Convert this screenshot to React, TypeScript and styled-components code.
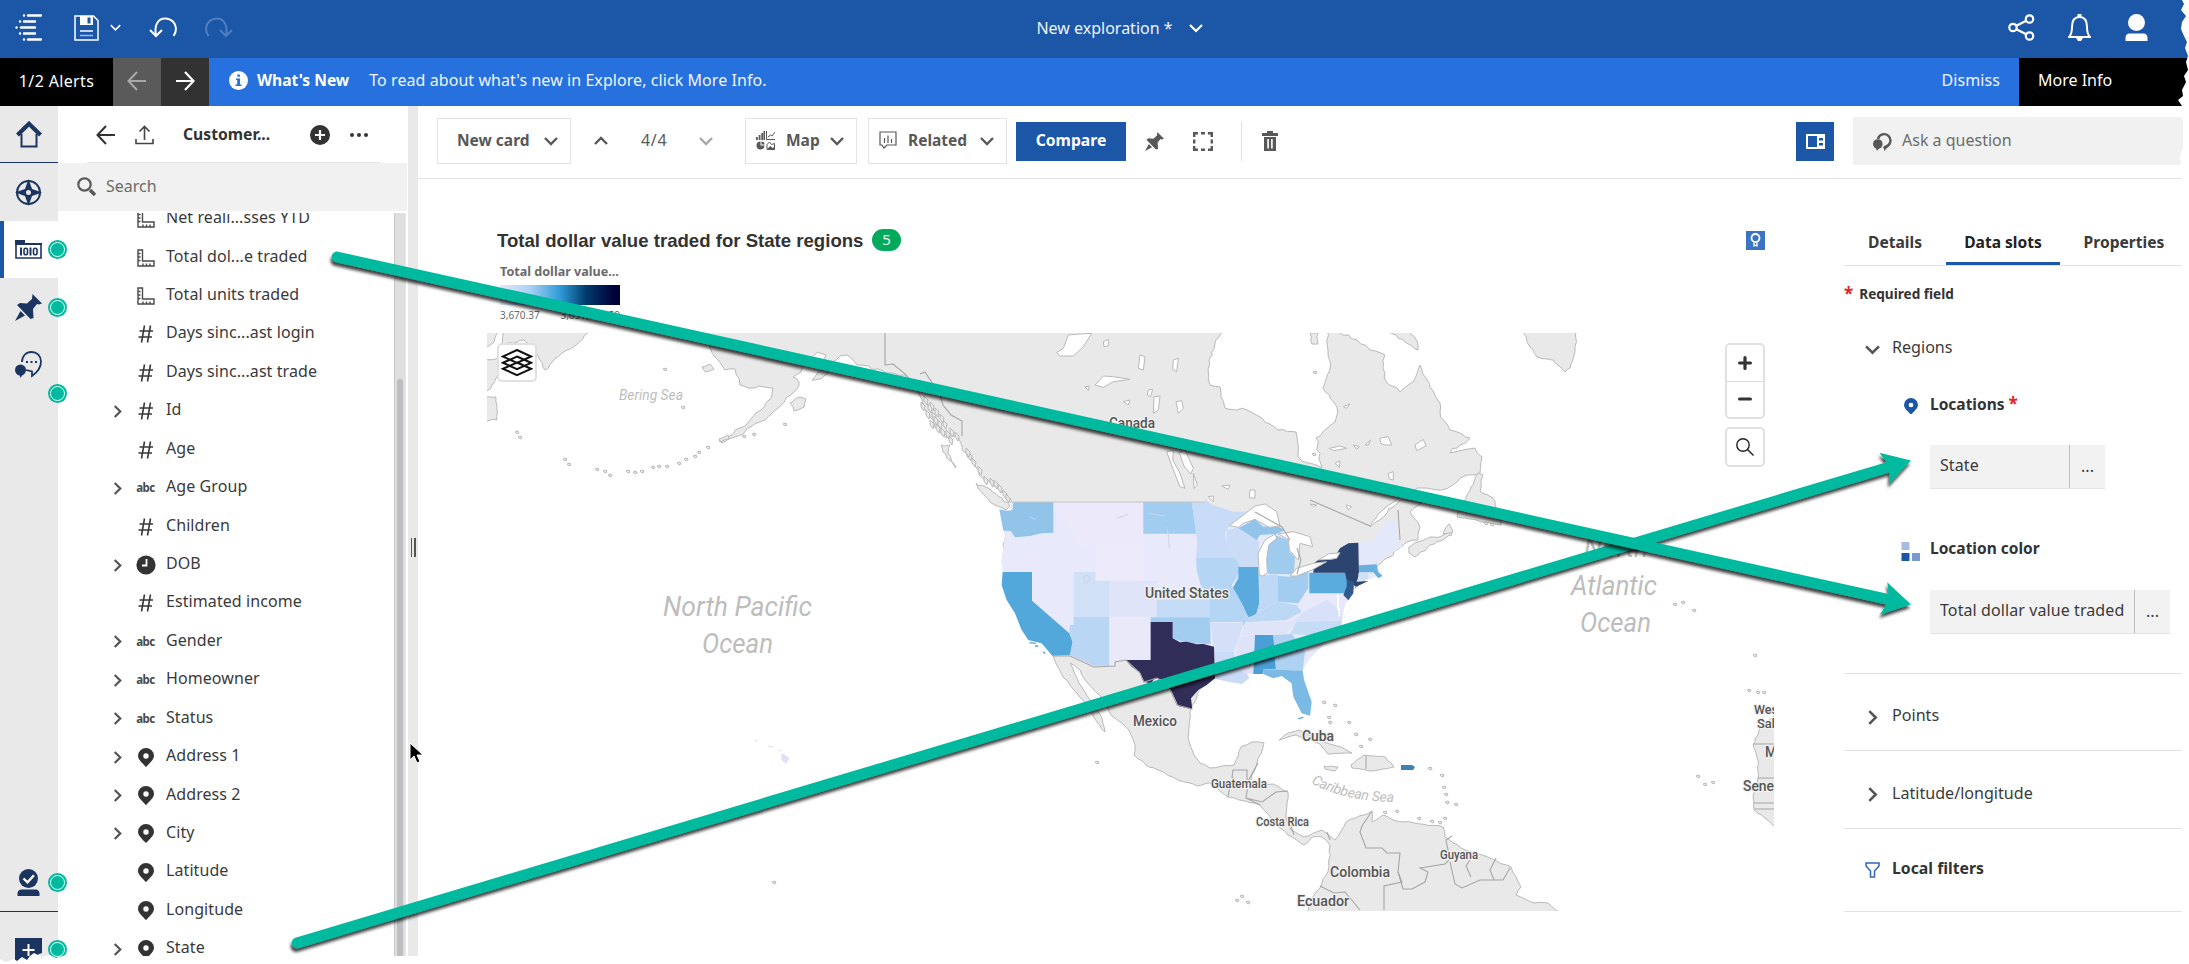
import React from 'react';
import styled, { createGlobalStyle } from 'styled-components';

const GlobalStyle = createGlobalStyle`
  * { box-sizing: border-box; }
  body { margin: 0; background: #fff; font-family: "Noto Sans", "Open Sans", sans-serif; font-size: 16px; color: #3a3a3a; }
  svg { display: block; flex: none; }
`;

/* ---------- page frame ---------- */
const Page = styled.div`
  position: relative; width: 2189px; height: 964px; overflow: hidden;
  display: flex; flex-direction: column; white-space: nowrap;
`;
const TopBar = styled.header`
  height: 58px; flex: none; background: #1c56a7; color: #fff;
  display: grid; grid-template-columns: 1fr auto 1fr; align-items: center; padding: 0 41px 3px 15px;
`;
const TopGroup = styled.div<{ $end?: boolean }>`
  display: flex; align-items: center; justify-content: ${p => (p.$end ? 'flex-end' : 'flex-start')};
`;
const DocTitle = styled.div`
  display: flex; align-items: center; gap: 16px; padding-left: 76px; color: #eef3fb; line-height: 22px;
`;
const Gap = styled.span<{ $w: number }>`width: ${p => p.$w}px; flex: none;`;

const AlertBar = styled.div`
  height: 48px; flex: none; background: #2671dd; color: #fff; display: flex; align-items: stretch;
`;
const AlertCell = styled.div<{ $w: number; $bg: string }>`
  width: ${p => p.$w}px; background: ${p => p.$bg}; display: flex; align-items: center; justify-content: center;
  padding-bottom: 3px; letter-spacing: 0.350px;
`;
const AlertBody = styled.div`
  flex: 1; display: flex; align-items: center; padding: 0 19px 4px 20px; color: #eef4fd;
  b { color: #fff; font-size: 15.600px; font-weight: 700; margin: 0 20px 0 9px; }
  span { letter-spacing: 0.070px; }
`;
const Dismiss = styled.span`margin-left: auto;`;
const MoreInfo = styled.div`
  width: 170px; background: #000; display: flex; align-items: center; padding: 0 0 4px 19px;
`;
const Body = styled.div`flex: 1; display: flex; min-height: 0;`;

/* ---------- icon rail ---------- */
const Rail = styled.nav`
  width: 58px; flex: none; background: #e9e9e9; display: flex; flex-direction: column;
`;
const RailItem = styled.div<{ $h: number; $line?: boolean; $active?: boolean; $pt?: number }>`
  height: ${p => p.$h}px; flex: none; display: flex; align-items: center; justify-content: center;
  border-bottom: ${p => (p.$line ? '1px solid #1b3560' : '0')};
  padding: ${p => p.$pt || 0}px ${p => (p.$active ? 5 : 1)}px 0 0;
  border-left: ${p => (p.$active ? '4px solid #1c56a7' : '0')};
  background: ${p => (p.$active ? '#fff' : 'transparent')};
`;
const RailSpace = styled.div`flex: 1;`;
const Marker = styled.i<{ $top: number }>`
  position: absolute; left: 48px; top: ${p => p.$top}px; width: 19px; height: 19px; border-radius: 50%;
  background: #00baa0; z-index: 2;
  &::after { content: ''; position: absolute; inset: 2px; border: 1px solid #eafffb; border-radius: 50%; }
`;

/* ---------- source panel ---------- */
const Source = styled.aside`
  width: 350px; flex: none; display: flex; flex-direction: column; background: #fff;
`;
const SourceHead = styled.div`
  height: 57px; flex: none; margin: 0 28px 0 29px; border-bottom: 1px solid #e4e4e4;
  display: flex; align-items: center; padding: 2px 12px 0 9px;
  b { font-size: 15.700px; font-weight: 700; margin: 0 auto 3px 29px; color: #333; }
`;
const SearchBox = styled.div`
  height: 48px; flex: none; background: #f1f1f1; margin-right: 1px; display: flex; align-items: center;
  gap: 10px; padding: 0 0 2px 19px; color: #6c6c6c;
`;
const ListArea = styled.div`flex: 1; display: flex; margin: 2px 2px 8px 0; overflow: hidden;`;
const List = styled.ul`
  flex: 1; margin: -14.500px 0 0; padding: 0; list-style: none; display: flex; flex-direction: column;
`;
const Row = styled.li`
  height: 38.430px; flex: none; display: grid; grid-template-columns: 22px 20px 1fr; column-gap: 10.500px;
  align-items: center; padding-left: 45px;
`;
const RowText = styled.span`padding-bottom: 1px; letter-spacing: 0.080px;`;
const Center = styled.span<{ $dx?: number }>`
  display: flex; justify-content: center; padding-top: 3px; margin-left: ${p => p.$dx || 0}px;
`;
const Abc = styled.span`font: 700 11.500px/12px "Noto Sans", sans-serif; letter-spacing: -0.500px; color: #4a4a4a;`;
const ScrollTrack = styled.div`
  width: 12px; flex: none; padding-top: 166px; background: #dedfdf; border-left: 1px solid #c6c8c8; border-right: 1px solid #e6e6e6;
`;
const ScrollThumb = styled.div`
  height: 100%; margin: 0 2px; border-radius: 3px 3px 0 0; background: #bcbfbf;
`;
const Splitter = styled.div`
  width: 10px; flex: none; margin-bottom: 8px; background: #e9e9e9; display: flex; align-items: center; justify-content: center;
  gap: 2px;
  &::before, &::after { content: ''; width: 1.500px; height: 19px; background: #555; margin-top: 32px; }
`;

/* ---------- work area ---------- */
const Work = styled.main`flex: 1; min-width: 0; display: flex; flex-direction: column; padding-right: 6px;`;
const Toolbar = styled.div`
  height: 73px; flex: none; border-bottom: 1px solid #e3e3e3; display: flex; align-items: center;
  padding: 0 0 2px 19px; color: #585858;
`;
const ToolButton = styled.div<{ $w: number; $ml?: number; $pl: number }>`
  width: ${p => p.$w}px; height: 46px; margin-left: ${p => p.$ml || 0}px; padding: 0 12px 0 ${p => p.$pl}px;
  border: 1px solid #e3e3e3; display: flex; align-items: center; justify-content: space-between;
  font-size: 15.500px; font-weight: 700;
`;
const ToolLabel = styled.span`display: flex; align-items: center; gap: 11px; padding-bottom: 2px;`;
const Compare = styled.div`
  width: 110px; height: 39px; margin-left: 9px; background: #1c56a7; color: #fff; font-size: 15.700px; font-weight: 700;
  display: flex; align-items: center; justify-content: center; padding-bottom: 2px;
`;
const Count = styled.span`width: 28px; margin: 0 30px 2px 33px; letter-spacing: 0.700px;`;
const Divider = styled.span`width: 1px; height: 39px; background: #e0e0e0; margin: 0 20px 0 28px;`;
const PanelToggle = styled.div`
  width: 38px; height: 39px; margin-left: auto; background: #1c56a7; display: flex; align-items: center; justify-content: center;
`;
const Ask = styled.div`
  width: 330px; height: 48px; margin-left: 19px; background: #f1f1f1; display: flex; align-items: center; gap: 10px;
  padding: 0 0 0 20px; color: #6c6c6c; span { padding-bottom: 2px; }
`;
const Stage = styled.div`flex: 1; display: flex; min-height: 0;`;
const Card = styled.section`width: 1356px; flex: none; padding: 49px 0 0 69px;`;
const CardHead = styled.div`height: 24px; display: flex; align-items: center; padding: 0 9px 0 10px;`;
const CardTitle = styled.h2`
  margin: 0; padding-top: 1px; font: 700 18.600px/24px "Liberation Sans", Arial, sans-serif; color: #333; width: 375px;
`;
const Badge = styled.span`
  width: 29px; height: 22px; border-radius: 11px; background: #00a95c; color: #e5fff2; font-size: 15px; line-height: 21px; text-align: center;
`;
const Hint = styled.span`
  width: 19px; height: 19px; margin-left: auto; background: #3a74c2; display: flex; align-items: center; justify-content: center;
`;
const Legend = styled.div`
  width: 120px; height: 81px; margin-left: 13px; padding-top: 11px; color: #6a6a6a; font-size: 12.600px; font-weight: 700; line-height: 18px;
`;
const Ramp = styled.div`
  height: 20px; margin-top: 4px;
  background: linear-gradient(90deg, #e6e6fa 0%, #a9d2f3 25%, #2f9bd8 50%, #003a6d 72%, #020039 95%);
`;
const RampEnds = styled.div`
  display: flex; justify-content: space-between; font-size: 10px; font-weight: 400; line-height: 20px;
`;
const MapBox = styled.div`position: relative; width: 1287px; height: 578px;`;
const MapButton = styled.div<{ $x: number; $y: number; $w: number; $h: number }>`
  position: absolute; left: ${p => p.$x}px; top: ${p => p.$y}px; width: ${p => p.$w}px; height: ${p => p.$h}px;
  background: #fff; border: 2px solid #e0e0e0; border-radius: 5px; display: flex; flex-direction: column;
  align-items: center;
  svg { margin: auto; }
  hr { width: 100%; margin: 0; border: 0; border-top: 1px solid #dcdcdc; }
`;

/* ---------- properties panel ---------- */
const Props = styled.aside`width: 338px; margin-left: 70px; flex: none; padding-top: 35px;`;
const Tabs = styled.div`
  height: 52px; border-bottom: 1px solid #e2e2e2; display: flex; align-items: stretch; font-size: 15.600px; font-weight: 700; color: #3a3a3a;
`;
const Tab = styled.div<{ $w: number; $on?: boolean }>`
  width: ${p => p.$w}px; flex: none; display: flex; align-items: center; justify-content: center; padding: 8px 0 0 0;
  border-bottom: 3px solid ${p => (p.$on ? '#1c56a7' : 'transparent')};
  color: ${p => (p.$on ? '#222' : 'inherit')};
`;
const Star = styled.span`color: #e62325; font-weight: 700; font-size: 17px;`;
const Required = styled.div`
  height: 55px; display: flex; align-items: center; gap: 6px; font-size: 13.600px; font-weight: 700; color: #333;
`;
const Section = styled.div<{ $h: number; $line?: boolean; $bold?: boolean; $pt?: number; $pb?: number }>`
  height: ${p => p.$h}px; display: flex; align-items: center; gap: 12px; padding: ${p => p.$pt || 0}px 0 ${p => p.$pb || 0}px 21px;
  border-bottom: ${p => (p.$line ? '1px solid #e2e2e2' : '0')};
  font-weight: ${p => (p.$bold ? 700 : 400)}; font-size: ${p => (p.$bold ? 15.8 : 16.1)}px; color: ${p => (p.$bold ? '#333' : 'inherit')};
  svg { margin-top: 4px; }
`;
const SlotGroup = styled.div<{ $h: number; $pt?: number; $line?: boolean }>`
  height: ${p => p.$h}px; padding-top: ${p => p.$pt || 0}px; border-bottom: ${p => (p.$line ? '1px solid #e2e2e2' : '0')};
`;
const SlotHead = styled.div`
  height: 28px; display: grid; grid-template-columns: 19px 1fr; column-gap: 10px; align-items: center; padding-left: 57px;
  font-size: 15.500px; font-weight: 700; color: #333;
  svg { margin: 6px auto 0; }
`;
const Slot = styled.div<{ $w: number }>`
  width: ${p => p.$w}px; height: 44px; margin: 28px 0 0 86px; background: #f2f2f2; border-bottom: 1px solid #e4e4e4; display: flex;
`;
const SlotName = styled.span`flex: 1; padding: 8px 0 0 10px; line-height: 24px; letter-spacing: 0.090px;`;
const SlotMore = styled.span`width: 36px; border-left: 1px solid #bdbdbd; text-align: center; line-height: 42px;`;

/* ---------- overlays ---------- */
const Overlay = styled.svg`position: absolute; left: 0; top: 0; pointer-events: none; z-index: 5;`;

const Chevron = ({ dir = 'down', c = '#555', w = 13, sw = 2.4 }: { dir?: string; c?: string; w?: number; sw?: number }) => {
  const rot = { down: 0, up: 180, right: -90 }[dir];
  return (
    <svg width={w} height={w} viewBox="0 0 14 14" fill="none" stroke={c} strokeWidth={sw}>
      <path d="M1 4l6 6 6-6" transform={`rotate(${rot} 7 7)`} />
    </svg>
  );
};
const PinMark = ({ c = '#333', w = 16 }: { c?: string; w?: number }) => (
  <svg width={w} height={w * 1.2} viewBox="0 0 16 19">
    <path fill={c} fillRule="evenodd" d="M8 0a8 8 0 0 1 8 7.800c0 3.600-4.800 7.600-8 11.200-3.200-3.600-8-7.600-8-11.200A8 8 0 0 1 8 0zm0 5.200a2.700 2.700 0 1 0 0 5.400 2.700 2.700 0 0 0 0-5.400z" />
  </svg>
);
const Thumbtack = ({ c, w }: { c: string; w: number }) => (
  <svg width={w} height={w} viewBox="0 0 27 27" fill={c}>
    <path d="M17.500 0l9.500 9.500-3 1-2-.5-4 5 .5 9-3 1L2 11l3-2 7 .500 5-4.500z" />
    <path d="M5.500 17l4.500 4.500L0 27z" />
  </svg>
);

const KindIcon = ({ kind }: { kind: string }) => {
  if (kind === 'abc') return <Abc>abc</Abc>;
  if (kind === 'pin') return <PinMark />;
  if (kind === 'clock')
    return (
      <svg width="20" height="20" viewBox="0 0 20 20">
        <circle cx="10" cy="10" r="9.600" fill="#333" />
        <path d="M10.500 4v6.500H6" fill="none" stroke="#fff" strokeWidth="1.800" />
      </svg>
    );
  if (kind === 'measure')
    return (
      <svg width="18" height="18" viewBox="0 0 18 18" fill="none" stroke="#4a4a4a" strokeWidth="1.400">
        <path d="M1 1h4.500v11H17v5H1zM1 4.500h2.500M1 8h2.500M1 11.500h2.500M6 17v-2.500M9.500 17v-2.500M13 17v-2.500" />
      </svg>
    );
  return (
    <svg width="16" height="18" viewBox="0 0 16 18" fill="none" stroke="#3a3a3a" strokeWidth="1.600">
      <path d="M6.500.5l-3 17M12.500.5l-3 17M1.500 6H15M.5 12H14" />
    </svg>
  );
};

const fields: [string, string, boolean][] = [
  ['Net reali...sses YTD', 'measure', false],
  ['Total dol...e traded', 'measure', false],
  ['Total units traded', 'measure', false],
  ['Days sinc...ast login', 'hash', false],
  ['Days sinc...ast trade', 'hash', false],
  ['Id', 'hash', true],
  ['Age', 'hash', false],
  ['Age Group', 'abc', true],
  ['Children', 'hash', false],
  ['DOB', 'clock', true],
  ['Estimated income', 'hash', false],
  ['Gender', 'abc', true],
  ['Homeowner', 'abc', true],
  ['Status', 'abc', true],
  ['Address 1', 'pin', true],
  ['Address 2', 'pin', true],
  ['City', 'pin', true],
  ['Latitude', 'pin', false],
  ['Longitude', 'pin', false],
  ['State', 'pin', true],
];

/* ---------- map geometry ---------- */
type Pt = [number, number];
const parse = (s: string): Pt[] => s.trim().split(/\s+/).map(p => p.split(',').map(Number) as Pt);

/* Breaks each long coast segment into short uneven steps so shores look natural. */
const shore = (s: string, amp = 1.6, step = 5): string => {
  const pts = parse(s);
  let seed = 7;
  const rnd = () => ((seed = (seed * 16807) % 2147483647) / 2147483647 - 0.5) * 2;
  let d = '';
  pts.forEach((a, i) => {
    const b = pts[(i + 1) % pts.length];
    d += `${i ? 'L' : 'M'}${a[0]} ${a[1]}`;
    const edge = a[1] <= 333 && b[1] <= 333;
    const rough = a[1] > 640 ? amp * 0.5 : amp;
    const n = edge ? 1 : Math.max(1, Math.round(Math.hypot(b[0] - a[0], b[1] - a[1]) / step));
    for (let k = 1; k < n; k++) {
      const x = a[0] + ((b[0] - a[0]) * k) / n + rnd() * rough;
      const y = a[1] + ((b[1] - a[1]) * k) / n + rnd() * rough;
      d += `L${x.toFixed(1)} ${y.toFixed(1)}`;
    }
  });
  return d + 'Z';
};

const northAmerica = `709,330 710,348 716,358 725,370 735,369 740,385 748,388 759,386 773,388 769,400 761,410 750,420 740,428 730,436 719,441
 722,443 738,436 752,426 765,420 777,409 786,398 796,390 799,382 793,377 801,372 805,363 818,352 826,355 824,366 812,380 824,376 836,360 847,355
 857,365 878,369 893,373 905,375 916,387 922,400 930,417 939,430 947,438 958,437 962,450 975,463 979,475 993,485 1010,498 1014,507
 1003,545 1010,600 1040,640 1053,656 1061,673 1074,690 1087,705 1097,722 1105,732 1102,718 1092,703 1079,683 1070,663 1080,670 1085,680 1103,700
 1111,715 1129,730 1135,745 1134,755 1146,765 1158,770 1178,780 1197,786 1210,783 1228,797 1245,801 1260,805 1273,822 1288,835 1304,845 1312,837
 1322,837 1330,845 1329,867 1320,888 1312,898 1307,915 1562,915 1548,903 1534,903 1516,895 1521,887 1511,867 1482,855 1461,848 1445,837 1443,827
 1414,823 1393,820 1383,815 1372,822 1372,811 1346,822 1335,840 1322,830 1304,837 1291,830 1286,817 1288,792 1273,784 1249,785 1257,763 1264,743
 1252,742 1241,747 1234,765 1210,768 1200,763 1194,755 1188,737 1191,708 1205,680 1290,660 1340,600 1403,545 1418,540 1420,527 1413,517 1410,512
 1422,503 1400,500 1387,513 1370,527 1385,508 1403,495 1417,488 1442,490 1457,482 1467,475 1480,473 1482,457 1475,448 1450,453 1460,445 1470,438
 1450,430 1440,413 1440,403 1430,387 1420,365 1413,382 1400,392 1387,383 1383,368 1385,355 1370,350 1357,340 1343,335 1327,330 1328,350 1330,370
 1323,388 1337,407 1335,422 1316,438 1322,468 1308,463 1298,457 1296,432 1278,430 1262,418 1247,410 1225,408 1220,387 1210,385 1209,360 1218,338 1222,330`;

const islands = [
  '504,330 591,330 576,345 562,353 552,362 545,370 540,360 534,350 524,340 506,344 500,352',
  '480,330 499,330 494,342 485,348',
  '480,362 498,358 500,372 492,385 480,400',
  '480,398 496,397 497,420 480,421',
  '976,483 990,489 1010,506 1006,510 990,502 978,488',
  '941,445 950,445 948,453 956,468 949,460 943,452',
  '790,403 800,397 806,399 804,407 794,411',
  '702,367 710,364 714,369 706,372',
  '719,439 728,435 729,439 721,442',
  '1478,473 1483,475 1480,491 1493,498 1498,513 1501,525 1485,522 1457,517 1458,512 1466,498',
  '1409,547 1418,542 1430,537 1440,537 1450,531 1452,535 1430,545 1415,557 1409,553',
  '1443,534 1449,524 1453,532',
  '1522,330 1577,330 1575,350 1570,368 1565,372 1553,360 1537,357 1530,347',
  '1386,330 1410,330 1417,341 1418,350 1405,342',
  '1310,333 1318,333 1318,344 1312,344',
  '1796,716 1774,716 1760,728 1753,745 1758,760 1758,778 1753,797 1754,810 1765,818 1774,826 1796,830',
  '1279,740 1288,733 1299,730 1320,741 1341,747 1352,753 1328,754 1320,744 1296,735',
  '1351,765 1364,755 1385,757 1394,767 1372,771 1352,768',
  '1324,766 1338,767 1335,771 1325,769',
];
const dots = `478,442 563,459 567,464 595,469 603,471 608,475 626,471 633,472 640,471 651,467 657,466 665,466 677,463 684,459 693,456 697,452 706,447 515,432 518,437
 663,369 681,407 742,436 752,434 783,424 1322,702 1333,705 1327,717 1328,722 1347,722 1354,734 1368,739 1359,746 1428,768 1440,775 1442,787 1444,794 1445,802 1454,804
 1383,812 1395,811 1417,818 1430,821 1438,822 1443,818 1235,900 1240,896 1246,902 1696,776 1703,784 1711,782 1747,690 1756,692 1762,692 1753,655 1673,604 1681,602 1692,610
 1095,762 772,882 1313,372 1312,454 1484,523 1490,524`;
const fjords = `921,402 926,410 932,412 930,420 938,420 941,428 936,424 946,430 949,436 968,452 972,458 930,402 935,408 984,476 990,478 998,484 1003,490
 924,396 928,404 934,416 943,420 940,414 950,428 955,432 966,448 978,466 994,480 1006,494`;

/* State shapes are drawn in a grid of thirds of a pixel. */
const US = '90,516 675,516 675,506 690,522 760,545 820,545 900,590 915,605 930,625 950,655 945,690 930,735 985,720 1000,700 1070,665 1105,640 1180,637 1200,600 1220,572 1250,575 1255,630 1268,650 1230,670 1195,690 1190,705 1205,735 1170,748 1130,755 1122,770 1118,795 1103,812 1095,825 1090,850 1085,885 1060,912 1040,925 1025,950 990,985 968,1020 972,1050 995,1115 990,1155 965,1150 940,1100 935,1060 905,1038 880,1045 850,1030 800,1030 808,1045 785,1062 720,1050 705,1045 680,1065 635,1100 637,1138 595,1128 565,1065 530,1045 490,1055 480,1030 437,990 408,997 405,1007 343,1007 270,975 217,977 185,940 145,930 125,900 105,850 80,810 65,765 68,725 64,690 75,620 58,540 95,540';
const states: [string, string][] = [
  ['#92c4ea', '100,516 220,516 220,608 185,610 150,618 105,622 92,603 70,602 58,538 80,543 98,540'],
  ['#ebe9fa', '220,516 490,516 490,640 346,640 300,655 270,600 235,560'],
  ['#edebfa', '346,640 490,640 490,752 346,752'],
  ['#a0cdf0', '490,516 635,516 644,570 648,611 490,611'],
  ['#c8dcf7', '635,516 675,516 675,506 690,522 760,545 820,545 750,585 735,610 740,645 765,684 648,684 652,640 644,580'],
  ['#cbdcf7', '740,600 780,592 830,620 838,640 832,711 775,711 762,684 738,645'],
  ['#92c4ea', '775,595 825,568 850,590 890,588 915,600 890,612 840,615 830,630 800,610'],
  ['#9ecbee', '865,733 858,690 868,640 885,615 925,630 928,665 945,680 942,733'],
  ['#b4d5f3', '648,684 765,684 780,711 770,745 755,765 662,765 650,720'],
  ['#5aaadd', '775,711 835,711 838,820 828,855 805,862 785,820 755,780 775,745'],
  ['#bfd8f5', '838,735 893,735 893,815 830,848 838,820'],
  ['#a3cdf0', '893,738 930,740 985,725 985,775 955,820 893,815'],
  ['#5aacdf', '988,728 1100,728 1110,765 1092,790 988,790'],
  ['#2b4570', '1000,728 1002,700 1015,690 1060,688 1080,655 1105,640 1135,638 1137,735 1130,755 1165,753 1128,770 1100,750 1095,728'],
  ['#2f5b8c', '1100,748 1122,757 1120,790 1105,811 1090,795 1100,770'],
  ['#e3e8fb', '1137,638 1180,637 1200,600 1220,572 1250,575 1255,630 1268,650 1195,690 1190,703 1137,705'],
  ['#6ab0de', '1137,706 1190,703 1194,725 1208,738 1195,745 1180,727 1137,727'],
  ['#cfe0f7', '1135,730 1165,728 1165,748 1135,752'],
  ['#53a8db', '68,726 156,726 156,812 268,910 278,935 270,975 217,977 185,940 145,930 125,900 105,850 80,810 65,765'],
  ['#cfe0f7', '281,726 346,726 346,752 388,752 388,860 281,860'],
  ['#dfe4f9', '388,752 530,752 530,860 388,860'],
  ['#b9d6f4', '281,860 388,860 388,1007 343,1007 270,975 278,935 268,910 270,885 281,885'],
  ['#e9e9fa', '388,860 512,860 512,990 437,990 408,997 388,1007'],
  ['#c5dcf6', '530,808 688,808 690,862 530,862'],
  ['#a3cdf0', '512,862 690,862 692,942 620,940 578,925 578,876 512,876'],
  ['#b4d5f3', '662,765 755,765 775,800 790,830 805,865 790,887 785,875 690,877 688,800'],
  ['#d3e0f8', '692,878 790,878 775,930 760,965 702,965'],
  ['#c9dbf7', '705,965 762,965 765,1010 800,1030 808,1045 785,1062 720,1050 705,1045'],
  ['#dfe2f9', '775,920 825,915 820,1032 795,1030 765,1010'],
  ['#bdd8f5', '800,868 838,845 893,815 950,825 965,845 920,870 800,877'],
  ['#e0e4f9', '795,878 965,872 915,912 785,915'],
  ['#d9e1f8', '965,850 1040,810 1085,840 1085,872 940,874'],
  ['#4a9fd6', '825,915 880,915 888,1018 850,1018 848,1032 820,1032'],
  ['#b0d2f2', '880,915 935,912 975,965 968,1022 888,1020'],
  ['#7bbae4', '848,1018 968,1022 972,1050 995,1115 990,1157 965,1150 940,1100 935,1060 905,1038 880,1045 850,1032'],
  ['#c5dcf6', '950,875 1085,872 1085,890 1060,910 1035,925 985,915 930,912'],
  ['#302d58', '512,876 578,876 578,925 600,937 620,935 650,943 670,942 702,950 705,1045 680,1065 655,1080 633,1105 637,1138 595,1128 580,1095 565,1065 545,1048 525,1045 512,1060 490,1055 478,1025 455,1010 437,990 512,990'],
];
const lakes = [
  '748,587 790,555 825,528 855,522 890,545 900,588 868,592 825,568 790,580 775,592',
  '838,735 834,670 855,630 885,612 890,625 866,645 860,690 862,728 848,738',
  '895,612 940,605 990,620 998,650 960,640 955,690 945,680 928,660 925,628',
  '930,738 950,715 1000,700 1040,695 1000,718 950,738',
  '1015,690 1045,672 1080,668 1070,685 1050,688',
  '598,368 615,360 640,415 632,432 612,408',
  '560,365 580,362 578,390 600,430 615,475 600,470 580,420',
  '640,430 652,465 642,475',
  '345,165 370,138 400,140 450,148 400,155 370,172',
  '230,68 250,55 265,15 300,12 335,10 310,50 280,78 240,78',
  '505,180 518,178 512,200 502,196',
  '522,200 540,198 535,240 520,250',
  '588,215 605,212 610,235 595,250',
  '480,75 495,80 490,120 475,115',
  '580,90 595,85 590,125 578,118',
  '810,480 825,480 825,505 808,503',
  '1200,325 1225,320 1235,345 1215,345 1202,340',
  '1305,345 1330,328 1338,348 1310,362',
  '1048,355 1080,348 1100,355 1060,362',
  '1120,345 1138,350 1130,358',
  '1155,345 1172,330 1165,345',
  '1225,430 1240,425 1240,450 1228,448',
  '1065,400 1080,392 1078,412',
  '1090,230 1110,222 1100,235',
  '430,215 450,210 445,225',
  '370,35 385,28 385,48 372,50',
  '315,170 328,168 325,182',
  '725,468 750,465 745,478',
  '1098,525 1115,530 1105,540',
  '990,522 1010,525 1000,530',
  '685,500 700,498 700,515',
];
const borders = [
  'M885 333V365L893 364L905 374L917 387M920 374L925 372L940 395L943 405L951 415L962 421V436',
  'M1053 656L1070 656L1094 667L1115 666V662L1126 660L1140 673L1144 682L1157 678L1168 685L1177 705L1192 709',
  'M1228 797L1230 786L1238 783L1232 777L1233 770H1247V783M1247 783L1258 763M1248 785L1246 798L1262 802L1276 792L1288 791M1246 798L1260 805',
  'M1290 823L1294 835M1330 840L1327 832',
  'M1372 811L1362 826L1360 832L1366 848L1382 848L1387 853H1400L1398 872L1403 889H1412L1425 882L1428 872L1420 868L1445 864L1452 857L1448 850L1446 840L1452 836',
  'M1320 886L1334 893L1345 892L1360 910M1398 872L1402 882L1384 886V910M1450 862L1455 884L1462 888L1480 880L1503 880L1510 868M1470 860L1466 866L1471 877M1496 858L1490 870L1494 880',
  'M1366 756V769M1753 744H1774M1758 778H1774M1754 803H1774M1755 809H1774',
  'M1255 512L1282 527L1290 540M1297 548L1301 560L1297 574M1310 500L1370 526M1398 510L1400 540',
];

const MapLabel = styled.text<{ $sea?: boolean }>`
  font-family: Roboto, "Noto Sans", sans-serif; font-style: ${p => (p.$sea ? 'italic' : 'normal')};
  font-weight: ${p => (p.$sea ? 400 : 500)}; fill: ${p => (p.$sea ? '#bdbdbd' : '#555')};
  stroke: ${p => (p.$sea ? 'none' : '#f1f1f1')}; stroke-width: 2.500px; paint-order: stroke; stroke-linejoin: round;
`;
const labels: [string, number, number, number, number, boolean?][] = [
  ['Canada', 1109, 428, 46, 14],
  ['United States', 1145, 598, 84, 15.5],
  ['Mexico', 1133, 726, 44, 14],
  ['Cuba', 1302, 741, 32, 14],
  ['Guatemala', 1211, 788, 56, 12],
  ['Costa Rica', 1256, 826, 53, 12],
  ['Guyana', 1440, 859, 38, 12],
  ['Colombia', 1330, 877, 60, 14],
  ['Ecuador', 1297, 906, 52, 14],
  ['North Pacific', 663, 616, 149, 27, true],
  ['Ocean', 702, 653, 71, 27, true],
  ['North', 1584, 557, 64, 27, true],
  ['Atlantic', 1571, 595, 86, 27, true],
  ['Ocean', 1580, 632, 71, 27, true],
  ['Bering Sea', 619, 400, 64, 14, true],
  ['Western', 1754, 714, 46, 12],
  ['Sahara', 1757, 728, 40, 12],
  ['Mali', 1765, 757, 26, 14],
  ['Senegal', 1743, 791, 50, 14],
];

const WorldMap = () => (
  <svg width="1287" height="578" viewBox="487 333 1287 578">
    <g fill="#e9e9e9" stroke="#b9b9b9" strokeWidth="1">
      <path d={shore(northAmerica)} />
      {islands.map(s => <path key={s} d={shore(s, 1.2, 4)} />)}
      {parse(dots).map(([x, y]) => <path key={`${x}-${y}`} d={`M${x} ${y}l3 -1 1 2 -2 1z`} />)}
      {parse(fjords).map(([x, y]) => <path key={`c${x}-${y}`} d={`M${x} ${y}l4 4 -1 5 -3 -4z`} />)}
    </g>
    <g transform="translate(980 330) scale(0.33333)">
      <polygon points={US} fill="#e8eafb" />
      {states.map(([fill, pts]) => <polygon key={pts} points={pts} fill={fill} />)}
      {lakes.map(pts => <polygon key={pts} points={pts} fill="#fff" stroke="#b9b9b9" strokeWidth="3" />)}
      <path d="M150 560l18 10M310 740l12-5 8 12-12 14zM410 565l35-12M505 550l50 8M560 590l6 30 2 35" fill="none" stroke="#c9d3e6" strokeWidth="3" />
      <path d="M148 938l20 2M190 965l6 6M165 948h10M955 1166l15-4" stroke="#53a8db" strokeWidth="4" />
      <path d="M1074 795v45M1078 835v25" stroke="#fff" strokeWidth="5" />
    </g>
    <path d="M1010 502H1205" stroke="#c4c4c4" fill="none" />
    <g fill="none" stroke="#a6a6a6" strokeWidth="1.100">{borders.map(d => <path key={d} d={d} />)}</g>
    <path d="M1401 765h11l3 2-2 3h-12z" fill="#3b82b5" />
    <path d="M755 741l3-1M768 746l5 1M778 750l3 1M782 754l7 4-3 5-4-3z" fill="#dfe2f7" stroke="#dcdff5" />
    {labels.map(([t, x, y, w, size, sea]) => (
      <MapLabel key={t + x} $sea={sea} x={x} y={y} fontSize={size} textLength={w} lengthAdjust="spacingAndGlyphs">{t}</MapLabel>
    ))}
    <path id="carib" d="M1311 783Q1345 802 1398 802" fill="none" />
    <MapLabel $sea fontSize="14"><textPath href="#carib" textLength="86">Caribbean Sea</textPath></MapLabel>
  </svg>
);

const arrowShape = (x1: number, y1: number, x2: number, y2: number) => {
  const len = Math.hypot(x2 - x1, y2 - y1);
  const ang = (Math.atan2(y2 - y1, x2 - x1) * 180) / Math.PI;
  return (
    <g transform={`translate(${x1} ${y1}) rotate(${ang})`} fill="#00baa0">
      <path d={`M0 -5.400A5.400 5.400 0 0 0 0 5.400L${len - 24} 5.400L${len - 28} 16.500L${len} 0L${len - 28} -16.500L${len - 24} -5.400Z`} />
    </g>
  );
};

const App = () => (
  <Page>
    <GlobalStyle />
    <TopBar>
      <TopGroup>
        <svg width="27" height="27" viewBox="0 0 27 27" stroke="#fff" strokeWidth="2.400" strokeLinecap="round">
          <path d="M13 1.500h13M9 7.500h11M6 13.500h14M9 19.500h11M13 25.500h13" />
          <path d="M9 1.500h.1M5 7.500h.1M1.500 13.500h.1M5 19.500h.1M9 25.500h.1" />
        </svg>
        <Gap $w={32} />
        <svg width="25" height="26" viewBox="0 0 25 26" fill="none" stroke="#fff" strokeWidth="1.500">
          <path d="M1 1h18.500L24 5.500V25H1z" />
          <path d="M6 1h13v9H6z" fill="#fff" stroke="none" />
          <path d="M15 2.500v6" stroke="#1c56a7" strokeWidth="3" />
          <path d="M6 16h13" /><path d="M6 20.500h13" opacity=".6" />
        </svg>
        <Gap $w={11} />
        <Chevron c="#fff" w={11} sw={2} />
        <Gap $w={28} />
        <svg width="28" height="22" viewBox="0 0 28 22" fill="none" stroke="#fff" strokeWidth="2">
          <path d="M1 13l6 6 6-6M7 19C5 8 9 1.500 16 1.500S27 7 27 11.500c0 3-1 5.500-2.500 7.500" />
        </svg>
        <Gap $w={28} />
        <svg width="28" height="22" viewBox="0 0 28 22" fill="none" stroke="#4f7fc0" strokeWidth="2">
          <path d="M27 13l-6 6-6-6M21 19C23 8 19 1.500 12 1.500S1 7 1 11.500c0 3 1 5.500 2.500 7.500" />
        </svg>
      </TopGroup>
      <DocTitle>New exploration *<Chevron c="#fff" w={14} sw={2.2} /></DocTitle>
      <TopGroup $end>
        <svg width="27" height="27" viewBox="0 0 27 27" fill="none" stroke="#fff" strokeWidth="2.200">
          <circle cx="5" cy="13.500" r="3.700" /><circle cx="21.500" cy="5" r="3.700" /><circle cx="21.500" cy="22" r="3.700" />
          <path d="M8.300 11.800L18.200 6.700M8.300 15.200l9.900 5.100" />
        </svg>
        <Gap $w={33} />
        <svg width="23" height="27" viewBox="0 0 23 27" fill="none" stroke="#fff" strokeWidth="2">
          <path d="M1 23h21c-2-2-3-5-3-10 0-6-2-10-7.500-10S4 7 4 13c0 5-1 8-3 10z" />
          <path d="M8 24h7l-2 3h-3zM9.500 0h4v3h-4z" fill="#fff" stroke="none" />
        </svg>
        <Gap $w={34} />
        <svg width="23" height="27" viewBox="0 0 23 27" fill="#fff">
          <circle cx="11.500" cy="8.500" r="8.500" /><path d="M.5 27v-3.500Q1 19.500 4.500 19.500h14q3.500 0 4 4V27z" />
        </svg>
      </TopGroup>
    </TopBar>
    <AlertBar>
      <AlertCell $w={113} $bg="#000">1/2 Alerts</AlertCell>
      <AlertCell $w={48} $bg="#5a5a5a">
        <svg width="20" height="20" viewBox="0 0 20 20" fill="none" stroke="#a8a8a8" strokeWidth="2"><path d="M10 1L1.500 10l8.500 9M1.500 10H19" /></svg>
      </AlertCell>
      <AlertCell $w={48} $bg="#323232">
        <svg width="20" height="20" viewBox="0 0 20 20" fill="none" stroke="#fff" strokeWidth="2.200"><path d="M10 1l8.500 9-8.500 9M18.500 10H1" /></svg>
      </AlertCell>
      <AlertBody>
        <svg width="19" height="19" viewBox="0 0 19 19">
          <circle cx="9.500" cy="9.500" r="9.500" fill="#fff" />
          <path d="M8.300 3.500h2.600v2.300H8.300zM7 7.500h4v6h1.500V15h-6v-1.500h1.700V9H7z" fill="#2671dd" />
        </svg>
        <b>What's New</b>
        <span>To read about what's new in Explore, click More Info.</span>
        <Dismiss>Dismiss</Dismiss>
      </AlertBody>
      <MoreInfo>More Info</MoreInfo>
    </AlertBar>
    <Body>
      <Rail>
        <RailItem $h={57} $line>
          <svg width="26" height="27" viewBox="0 0 26 27" fill="none" stroke="#1b3560">
            <path d="M5.500 13v12.500h15V13" strokeWidth="2" /><path d="M1.500 14L13 2.800 24.500 14" strokeWidth="4.200" />
          </svg>
        </RailItem>
        <RailItem $h={58}>
          <svg width="27" height="27" viewBox="0 0 27 27">
            <circle cx="13.500" cy="13.500" r="11.500" fill="none" stroke="#1b3560" strokeWidth="2" />
            <path fillRule="evenodd" fill="#1b3560" d="M13.500 0l3.500 10 10 3.500-10 3.500-3.500 10L10 17 0 13.500 10 10zM13.500 11a2.500 2.500 0 1 0 0 5 2.500 2.500 0 0 0 0-5z" />
          </svg>
        </RailItem>
        <RailItem $h={57} $active>
          <svg width="27" height="19" viewBox="0 0 27 19" fill="none" stroke="#1b3560" strokeWidth="1.600">
            <path d="M1 4h25v14H1z" /><path d="M0 0h10v3h17v2H0z" fill="#1b3560" stroke="none" />
            <path d="M6 7.500v8M15.500 7.500v8" strokeWidth="2" /><rect x="9" y="8.300" width="3.500" height="6.400" rx="1.700" /><rect x="18.500" y="8.300" width="3.500" height="6.400" rx="1.700" />
          </svg>
        </RailItem>
        <RailItem $h={58}><Thumbtack c="#1b3560" w={27} /></RailItem>
        <RailItem $h={56}>
          <svg width="27" height="27" viewBox="0 0 27 27" fill="none" stroke="#1b3560" strokeWidth="1.800">
            <path d="M7 11c0-6 4-10 9.500-10S26 5 26 10.500c0 6-4 11-9 14.500v-4.500l-6-1.500" />
            <circle cx="5.500" cy="19" r="5.500" fill="#1b3560" stroke="none" /><path d="M4 22l1.500 5 3-5z" fill="#1b3560" stroke="none" />
            <path d="M11 11h2M15.500 11h2M20 11h2" strokeWidth="2.200" />
          </svg>
        </RailItem>
        <RailSpace />
        <RailItem $h={58} $line>
          <svg width="23" height="27" viewBox="0 0 23 27" fill="#1b3560">
            <circle cx="11.500" cy="9.500" r="9.500" /><path d="M.5 27v-3Q1 20.500 4.500 20.500h14q3.500 0 4 3.500v3z" />
            <path d="M6.500 9.500l4 3.800 6.500-7" fill="none" stroke="#fff" strokeWidth="2.400" />
          </svg>
        </RailItem>
        <RailItem $h={52} $pt={26}>
          <svg width="27" height="27" viewBox="0 0 27 27">
            <path d="M0 0h27v15c-4 1-7 3-8 9H0z" fill="#1b3560" /><path d="M13.500 6v12M7.500 12h12" stroke="#fff" strokeWidth="2" />
          </svg>
        </RailItem>
      </Rail>
      <Source>
        <SourceHead>
          <svg width="20" height="20" viewBox="0 0 20 20" fill="none" stroke="#333" strokeWidth="2"><path d="M10 1L1.500 10l8.500 9M1.500 10H19" /></svg>
          <Gap $w={19} />
          <svg width="19" height="20" viewBox="0 0 19 20" fill="none" stroke="#444" strokeWidth="1.600">
            <path d="M9.500 15V2M4.500 6.500l5-5 5 5" /><path d="M1 14v4.500h17V14" />
          </svg>
          <b>Customer...</b>
          <svg width="20" height="20" viewBox="0 0 20 20">
            <circle cx="10" cy="10" r="10" fill="#333" /><path d="M10 5v10M5 10h10" stroke="#fff" strokeWidth="2.200" />
          </svg>
          <Gap $w={20} />
          <svg width="18" height="4" viewBox="0 0 18 4" fill="#333"><circle cx="2" cy="2" r="2" /><circle cx="9" cy="2" r="2" /><circle cx="16" cy="2" r="2" /></svg>
        </SourceHead>
        <SearchBox>
          <svg width="19" height="19" viewBox="0 0 19 19" fill="none" stroke="#5a5a5a">
            <circle cx="7.500" cy="7.500" r="6.200" strokeWidth="2.200" /><path d="M13 13l5 5" strokeWidth="3.600" />
          </svg>
          <span>Search</span>
        </SearchBox>
        <ListArea>
          <List>
            {fields.map(([name, kind, open]) => (
              <Row key={name}>
                <Center $dx={7}>{open && <Chevron dir="right" />}</Center>
                <Center><KindIcon kind={kind} /></Center>
                <RowText>{name}</RowText>
              </Row>
            ))}
          </List>
          <ScrollTrack><ScrollThumb /></ScrollTrack>
        </ListArea>
      </Source>
      <Splitter />
      <Work>
        <Toolbar>
          <ToolButton $w={134} $pl={19}><ToolLabel>New card</ToolLabel><Chevron c="#585858" w={14} /></ToolButton>
          <Gap $w={23} />
          <Chevron dir="up" c="#585858" w={14} />
          <Count>4/4</Count>
          <Chevron c="#a8a8a8" w={14} />
          <ToolButton $w={112} $ml={32} $pl={10}>
            <ToolLabel>
              <svg width="19" height="19" viewBox="0 0 19 19" fill="#585858">
                <path d="M0 6h1.800v3H0zM2.700 4h1.800v5H2.700zM5.300 2h1.800v7H5.300zM7.500 0H9v9H7.500z" />
                <path d="M10.500 0v8.500H19M12 6l2.500-2 1.500 1 3-4" fill="none" stroke="#585858" />
                <circle cx="4.500" cy="14.500" r="4" /><path d="M4.500 14.500V10H9v4.500z" fill="#fff" /><path d="M5.500 13.500v-3a3 3 0 0 1 3 3z" />
                <path d="M11 18.500v-5l2.500-2.500 2 2.500 3-1v6z" fill="none" stroke="#585858" /><path d="M11 18l3.500-3 2 2 2-1v2.500h-7.500z" />
              </svg>
              Map
            </ToolLabel>
            <Chevron c="#585858" w={14} />
          </ToolButton>
          <ToolButton $w={139} $ml={11} $pl={10}>
            <ToolLabel>
              <svg width="18" height="18" viewBox="0 0 18 18" fill="none" stroke="#585858" strokeWidth="1.200">
                <path d="M1 1h16v13H8l-3 3-2-3H1zM5.500 7v5M9 4.500V12M12.500 8v4" />
              </svg>
              Related
            </ToolLabel>
            <Chevron c="#585858" w={14} />
          </ToolButton>
          <Compare>Compare</Compare>
          <Gap $w={19} />
          <Thumbtack c="#585858" w={19} />
          <Gap $w={29} />
          <svg width="20" height="19" viewBox="0 0 20 19" fill="none" stroke="#585858" strokeWidth="2.400">
            <path d="M1.200 5V1.200H5M8 1.200h4M15 1.200h3.800V5M18.800 7.500v4M18.800 14v3.800H15M12 17.800H8M5 17.800H1.200V14M1.200 11.500v-4" />
          </svg>
          <Divider />
          <svg width="16" height="20" viewBox="0 0 16 20" fill="#585858">
            <path d="M0 2h5V0h6v2h5v3H0z" /><path d="M2 6h12v14H2zM5.300 8v9.500h1.600V8zM9.100 8v9.500h1.600V8z" fillRule="evenodd" />
          </svg>
          <PanelToggle>
            <svg width="19" height="15" viewBox="0 0 19 15" fill="#fff">
              <path fillRule="evenodd" d="M0 0h19v15H0zM2 2v11h9V2zM13 4v2.500h4V4zM13 9v2.500h4V9z" />
            </svg>
          </PanelToggle>
          <Ask>
            <svg width="19" height="20" viewBox="0 0 19 20" fill="#585858">
              <path d="M5 8a6.300 6.300 0 1 1 8 7.500L10.500 17" fill="none" stroke="#585858" strokeWidth="2.400" />
              <circle cx="4.800" cy="13" r="4.800" /><path d="M2.500 16l1.500 4 3-4zM11 15v5l5-5z" />
            </svg>
            <span>Ask a question</span>
          </Ask>
        </Toolbar>
        <Stage>
          <Card>
            <CardHead>
              <CardTitle>Total dollar value traded for State regions</CardTitle>
              <Badge>5</Badge>
              <Hint>
                <svg width="11" height="14" viewBox="0 0 11 14" fill="none" stroke="#fff" strokeWidth="1.800">
                  <circle cx="5.500" cy="5" r="4" /><path d="M4 9.500v4M7 9.500v4M4 12.500h3" strokeWidth="1.400" />
                </svg>
              </Hint>
            </CardHead>
            <Legend>
              Total dollar value...
              <Ramp />
              <RampEnds><span>3,670.37</span><span>3,651,389.59</span></RampEnds>
            </Legend>
            <MapBox>
              <WorldMap />
              <MapButton $x={10} $y={10} $w={40} $h={39}>
                <svg width="32" height="28" viewBox="0 0 32 28" fill="#fff" stroke="#111" strokeWidth="2">
                  <path d="M16 13.500l14 6.300-14 6.300L2 19.800zM16 7.500l14 6.300-14 6.300L2 13.800zM16 1l14 6.500L16 14 2 7.500z" />
                </svg>
              </MapButton>
              <MapButton $x={1238} $y={10} $w={40} $h={76}>
                <svg width="14" height="14" viewBox="0 0 14 14" stroke="#333" strokeWidth="3.200" strokeLinecap="round"><path d="M7 1.600v10.800M1.600 7h10.800" /></svg>
                <hr />
                <svg width="14" height="14" viewBox="0 0 14 14" stroke="#333" strokeWidth="3.200" strokeLinecap="round"><path d="M1.600 7h10.800" /></svg>
              </MapButton>
              <MapButton $x={1238} $y={94} $w={40} $h={40}>
                <svg width="18" height="18" viewBox="0 0 18 18" fill="none" stroke="#222" strokeWidth="1.400"><circle cx="7" cy="7" r="6.200" /><path d="M11.500 11.500l6 6" /></svg>
              </MapButton>
            </MapBox>
          </Card>
          <Props>
            <Tabs>
              <Tab $w={102}>Details</Tab>
              <Tab $w={114} $on>Data slots</Tab>
              <Tab $w={128}>Properties</Tab>
            </Tabs>
            <Required><Star>*</Star>Required field</Required>
            <Section $h={52}><Chevron w={15} />Regions</Section>
            <SlotGroup $h={161} $pt={16}>
              <SlotHead><PinMark c="#1c56a7" w={14} /><span>Locations <Star>*</Star></span></SlotHead>
              <Slot $w={175}><SlotName>State</SlotName><SlotMore>...</SlotMore></Slot>
            </SlotGroup>
            <SlotGroup $h={140} $line>
              <SlotHead>
                <svg width="19" height="19" viewBox="0 0 19 19"><path fill="#a6bbdf" d="M.5 0h8v8h-8z" /><path fill="#1c56a7" d="M.5 11h8v8h-8z" /><path fill="#7899cd" d="M11 11h8v8h-8z" /></svg>
                <span>Location color</span>
              </SlotHead>
              <Slot $w={240}><SlotName>Total dollar value traded</SlotName><SlotMore>...</SlotMore></Slot>
            </SlotGroup>
            <Section $h={77} $line $pt={6}><Chevron dir="right" w={15} />Points</Section>
            <Section $h={78} $line $pt={6}><Chevron dir="right" w={15} />Latitude/longitude</Section>
            <Section $h={83} $line $bold $pb={4}>
              <svg width="15" height="16" viewBox="0 0 15 16" fill="none" stroke="#2f66b5" strokeWidth="1.500"><path d="M1 1h13v3l-4.500 5v6h-4V9L1 4z" /></svg>
              Local filters
            </Section>
          </Props>
        </Stage>
      </Work>
    </Body>
    {[240, 298, 384, 873, 940].map(t => <Marker key={t} $top={t} />)}
    <Overlay width="2189" height="964" viewBox="0 0 2189 964">
      <defs>
        <filter id="lift" x="-5%" y="-5%" width="110%" height="115%">
          <feDropShadow dx="-1" dy="3.500" stdDeviation="1.600" floodColor="#000" floodOpacity="0.750" />
        </filter>
      </defs>
      <g filter="url(#lift)">{arrowShape(297, 943, 1911, 460.5)}</g>
      <g filter="url(#lift)">{arrowShape(337, 257, 1911, 604.5)}</g>
      <path fill="#fff" d="M2189 0H2182L2184 4 2181 10 2186 16 2182 22 2181 29 2184 36 2187 42 2185 48 2188 56 2186 62 2188 70 2184 76 2186 82 2182 90 2183 96 2178 100 2182 106 2182 118 2185 126 2188 134 2187 142 2183 148 2180 156 2181 166 2182 180H2189z" />
      <path fill="#fff" d="M0 964V959L6 962 14 959 17 961 22 957 27 960 30 956 34 953 42 957 50 955 56 958 66 955 68 964z" />
      <path d="M410 743v17l4-4 3 7 3-1.500-3-6.500h6z" fill="#000" stroke="#fff" strokeWidth="1" />
    </Overlay>
  </Page>
);

export default App;
